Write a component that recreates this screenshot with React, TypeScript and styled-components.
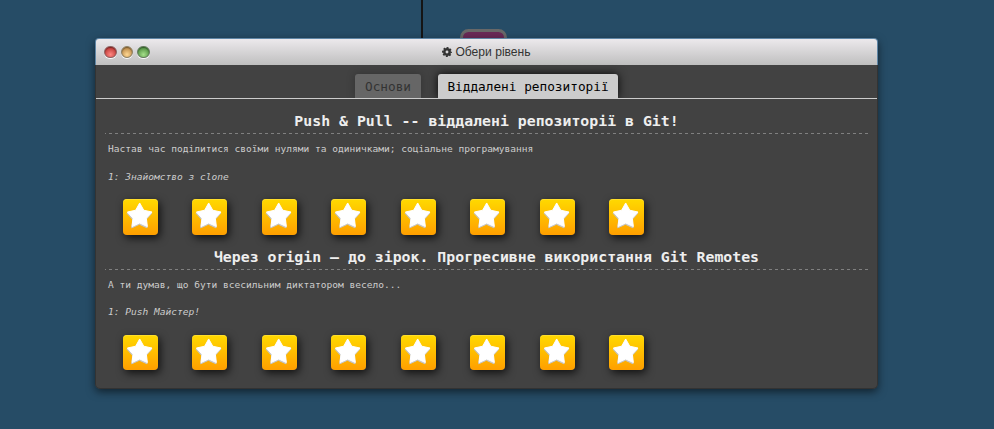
import React from "react";
import styled, { createGlobalStyle } from "styled-components";

const Global = createGlobalStyle`
  * { box-sizing: border-box; }
  body { margin: 0; background: #264c66; overflow: hidden; }
`;

const mono = `"DejaVu Sans Mono", "Liberation Mono", monospace`;

const Desktop = styled.main`
  position: relative;
  width: 994px;
  height: 429px;
  padding: 38px 0 0 95px;
  background: #264c66;
  overflow: hidden;
`;

const Tree = styled.svg`
  position: absolute;
  top: 0;
  left: 0;
`;

const Window = styled.section`
  position: relative;
  width: 783px;
  height: 351px;
  border-radius: 5px;
  box-shadow: 0 3px 8px rgba(0, 0, 0, 0.55);
`;

const TitleBar = styled.header`
  display: flex;
  align-items: center;
  height: 27px;
  padding: 0 8px;
  border: 1px solid #5f86a6;
  border-bottom: 0;
  border-radius: 4px 4px 0 0;
  background: linear-gradient(#ece9ec, #bfbfbf);
`;

const Lights = styled.div`
  display: flex;
  gap: 4px;
  width: 60px;
`;

const Light = styled.span<{ $top: string; $bottom: string; $ring: string }>`
  width: 12.6px;
  height: 12.6px;
  border-radius: 50%;
  border: 1px solid ${(p) => p.$ring};
  background: radial-gradient(circle at 50% 75%, ${(p) => p.$bottom}, ${(p) => p.$top} 80%);
  box-shadow: 0 1px 0 #f8f8f8, inset 0 1px 1px rgba(0, 0, 0, 0.35);
`;

const Title = styled.div`
  display: flex;
  flex: 1;
  justify-content: center;
  align-items: center;
  gap: 3px;
  padding-right: 60px;
  color: #333;
  font: 12.1px/16px "Liberation Sans", Arial, sans-serif;
`;

const Body = styled.div`
  height: 324px;
  border: 1px solid #333;
  border-top: 0;
  border-radius: 0 0 5px 5px;
  background: #424242;
  color: #ddd;
  font-family: ${mono};
`;

const Tabs = styled.nav`
  display: flex;
  gap: 17px;
  height: 34px;
  padding: 9px 0 0 259px;
  border-bottom: 1px solid #ccc;
`;

const Tab = styled.div<{ $active?: boolean }>`
  width: ${(p) => (p.$active ? 180 : 66)}px;
  height: 24px;
  border-radius: 3px 3px 0 0;
  background: ${(p) => (p.$active ? "#ccc" : "#666")};
  color: ${(p) => (p.$active ? "#000" : "#333")};
  box-shadow: 0 0 ${(p) => (p.$active ? "10px rgba(0,0,0,.9)" : "8px rgba(0,0,0,.25)")};
  clip-path: inset(-15px -15px 0 -15px);
  font-size: 12.75px;
  line-height: 25px;
  text-align: center;
  white-space: nowrap;
`;

const Series = styled.article`
  height: 135.7px;
  padding: 13px 9px 0;
`;

const Heading = styled.h2`
  height: 21px;
  margin: 0;
  font-size: 14.85px;
  line-height: 19px;
  font-weight: bold;
  text-align: center;
  color: #eee;
  white-space: nowrap;
`;

const Divider = styled.div`
  height: 1px;
  background: repeating-linear-gradient(90deg, #808080 0 1px, transparent 1px 4px, #808080 4px 6px);
`;

const Description = styled.p`
  margin: 8px 0 0 3px;
  font-size: 9.55px;
  line-height: 14px;
  color: #ccc;
`;

const Caption = styled(Description)`
  margin-top: 13.7px;
  font-style: italic;
`;

const Levels = styled.div`
  display: flex;
  gap: 34.7px;
  padding: 15.3px 0 0 17.8px;
`;

const Level = styled.div`
  display: flex;
  width: 34.8px;
  height: 35.6px;
  border-radius: 4px;
  background: linear-gradient(#ffd900, #ff9f00);
  box-shadow: 2px 3px 8px rgba(0, 0, 0, 0.75), inset 0 1px 0 rgba(255, 225, 60, 0.7);
`;

const starPath =
  "M16.8 3.9L20.9 11.2L29.2 13L23.5 19.2L24.5 27.6L16.8 24L9.1 27.6L10.1 19.2L4.4 13L12.7 11.2Z";

const Star = () => (
  <svg width="35" height="35" viewBox="0 0 35 35">
    <path d={starPath} transform="translate(-.3 1.3)" fill="#c6c8ce" stroke="#c6c8ce" strokeLinejoin="round" />
    <path d={starPath} fill="#fff" stroke="#fff" strokeLinejoin="round" />
  </svg>
);

const Gear = () => (
  <svg width="10" height="10" viewBox="0 0 20 20">
    <g fill="none" stroke="#333">
      <circle cx="10" cy="10" r="5.4" strokeWidth="5" />
      <circle cx="10" cy="10" r="8.4" strokeWidth="3.2" strokeDasharray="3.8 2.8" strokeDashoffset="1.9" />
    </g>
  </svg>
);

const series = [
  {
    title: "Push & Pull -- віддалені репозиторії в Git!",
    about: "Настав час поділитися своїми нулями та одиничками; соціальне програмування",
    caption: "1: Знайомство з clone",
  },
  {
    title: "Через origin – до зірок. Прогресивне використання Git Remotes",
    about: "А ти думав, що бути всесильним диктатором весело...",
    caption: "1: Push Майстер!",
  },
];

export default function App() {
  return (
    <Desktop>
      <Global />
      <Tree width="994" height="60">
        <path d="M422 0V60" stroke="#151515" strokeWidth="2" />
        <rect x="461.5" y="30.5" width="44" height="30" rx="7" fill="#692956" stroke="#686868" strokeWidth="3" />
      </Tree>
      <Window>
        <TitleBar>
          <Lights>
            <Light $top="#b93431" $bottom="#ff8782" $ring="#8d6262" />
            <Light $top="#b68444" $bottom="#ffd792" $ring="#8d8062" />
            <Light $top="#4b8b3c" $bottom="#a5df8a" $ring="#647b5e" />
          </Lights>
          <Title>
            <Gear />
            Обери рівень
          </Title>
        </TitleBar>
        <Body>
          <Tabs>
            <Tab>Основи</Tab>
            <Tab $active>Віддалені репозиторії</Tab>
          </Tabs>
          {series.map((s) => (
            <Series key={s.title}>
              <Heading>{s.title}</Heading>
              <Divider />
              <Description>{s.about}</Description>
              <Caption>{s.caption}</Caption>
              <Levels>
                {Array.from({ length: 8 }, (_, i) => (
                  <Level key={i}>
                    <Star />
                  </Level>
                ))}
              </Levels>
            </Series>
          ))}
        </Body>
      </Window>
    </Desktop>
  );
}
